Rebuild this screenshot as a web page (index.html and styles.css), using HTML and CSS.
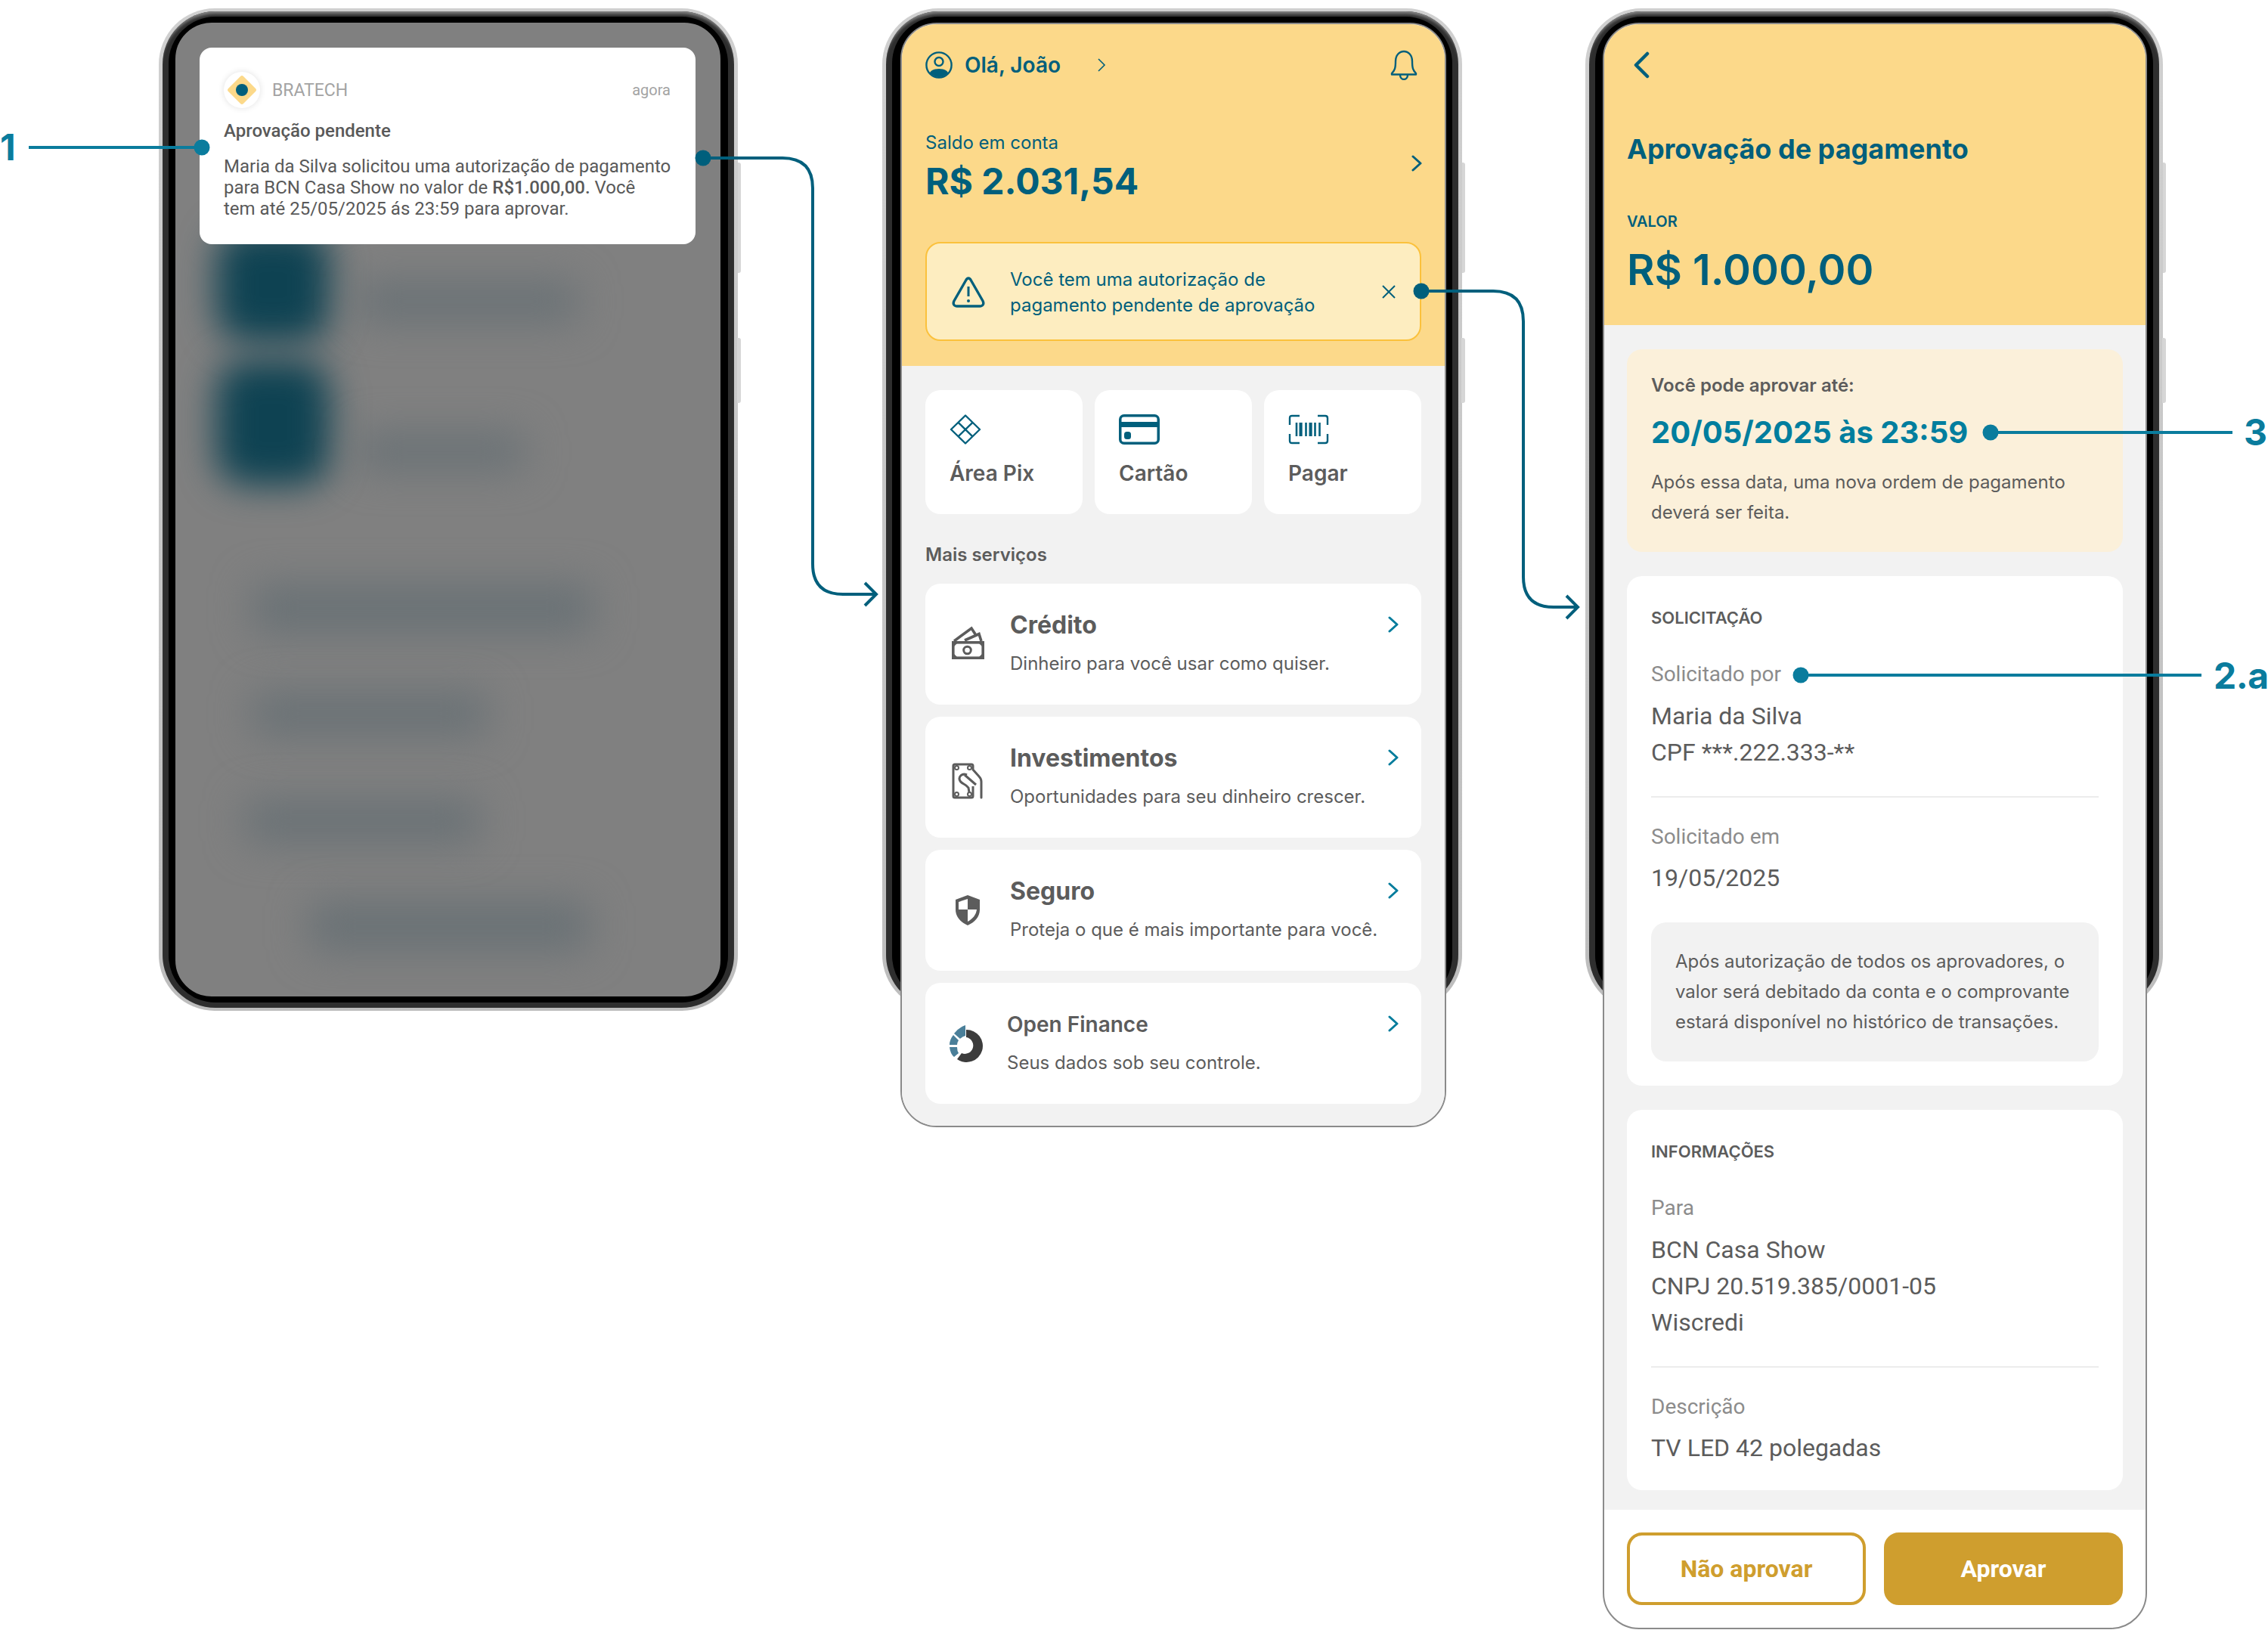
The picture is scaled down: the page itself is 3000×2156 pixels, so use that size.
FILE: index.html
```html
<!DOCTYPE html>
<html lang="pt-BR">

<head>
    <meta charset="UTF-8">
    <meta name="viewport" content="width=device-width, initial-scale=1.0">
    <title>Aprovação de pagamento</title>
    <link rel="stylesheet" href="styles.css">
</head>

<body>
    <div class="stage">

        <!-- Tela 1: notificação -->
        <section class="phone phone-one">
            <div class="phone-frame"></div>
            <div class="screen screen-locked">
                <div class="blur blur-a"></div>
                <div class="blur blur-b"></div>
                <div class="blur blur-c"></div>
                <div class="blur blur-d"></div>
                <div class="blur blur-e"></div>
                <div class="blur blur-f"></div>
                <div class="blur blur-g"></div>
                <div class="blur blur-h"></div>
                <div class="notification">
                    <div class="notification-head">
                        <span class="app-logo">
                            <svg width="40" height="40" viewBox="0 0 40 40">
                                <path d="M20 1 Q21 1 22 2 L38 18 Q40 20 38 22 L22 38 Q20 40 18 38 L2 22 Q0 20 2 18 L18 2 Q19 1 20 1 Z" fill="#fcd98a" />
                                <ellipse cx="20" cy="20" rx="8" ry="8" fill="#005f7c" />
                            </svg>
                        </span>
                        <span class="app-name">BRATECH</span>
                        <span class="app-time">agora</span>
                    </div>
                    <div class="notification-title">Aprovação pendente</div>
                    <p class="notification-text">Maria da Silva solicitou uma autorização de pagamento<br>para BCN Casa Show no valor de <b>R$1.000,00.</b> Você<br>tem até 25/05/2025 ás 23:59 para aprovar.</p>
                </div>
            </div>
        </section>

        <!-- Tela 2: home -->
        <section class="phone phone-two">
            <div class="phone-frame"></div>
            <div class="screen">
                <header class="home-head">
                    <div class="topbar">
                        <svg class="user-icon" width="36" height="36" viewBox="0 0 36 36">
                            <defs>
                                <clipPath id="userClip">
                                    <circle cx="18" cy="18" r="16" />
                                </clipPath>
                            </defs>
                            <path d="M4 36 C4 26 10 23 18 23 C26 23 32 26 32 36 Z" fill="#005f7c" clip-path="url(#userClip)" />
                            <circle cx="18" cy="13.5" r="5.5" fill="none" stroke="#005f7c" stroke-width="2.4" />
                            <circle cx="18" cy="18" r="16.6" fill="none" stroke="#005f7c" stroke-width="2.4" />
                        </svg>
                        <span class="greeting">Olá, João</span>
                        <svg class="greeting-arrow" width="12" height="20" viewBox="0 0 12 20">
                            <path d="M2 2 L10 10 L2 18" fill="none" stroke="#005f7c" stroke-width="1.6" />
                        </svg>
                        <svg class="bell" width="36" height="40" viewBox="0 0 36 40">
                            <path d="M2 31 C6 27 7 24 7 15 C7 7 12 2 18 2 C24 2 29 7 29 15 C29 24 30 27 34 31 L34 32.5 L2 32.5 Z" fill="none" stroke="#005f7c" stroke-width="2.4" stroke-linejoin="round" />
                            <path d="M13 33 C13 41 23 41 23 33" fill="none" stroke="#005f7c" stroke-width="2.4" />
                        </svg>
                    </div>
                    <div class="balance">
                        <div>
                            <div class="balance-label">Saldo em conta</div>
                            <div class="balance-value">R$ 2.031,54</div>
                        </div>
                        <svg class="balance-arrow" width="14" height="22" viewBox="0 0 14 22">
                            <path d="M2 2 L12 11 L2 20" fill="none" stroke="#005f7c" stroke-width="3" stroke-linecap="round" stroke-linejoin="round" />
                        </svg>
                    </div>
                    <div class="alert">
                        <svg width="46" height="42" viewBox="0 0 46 42">
                            <path d="M23 3 C24.5 3 25.5 4 26.5 6 L42 33 C44 37 42 40 38 40 L8 40 C4 40 2 37 4 33 L19.5 6 C20.5 4 21.5 3 23 3 Z" fill="none" stroke="#005f7c" stroke-width="3.4" stroke-linejoin="round" />
                            <path d="M23 14 V27" stroke="#005f7c" stroke-width="3" />
                            <circle cx="23" cy="33" r="2" fill="#005f7c" />
                        </svg>
                        <p class="alert-text">Você tem uma autorização de<br>pagamento pendente de aprovação</p>
                        <svg class="alert-close" width="20" height="20" viewBox="0 0 20 20">
                            <path d="M2 2 L18 18 M18 2 L2 18" stroke="#005f7c" stroke-width="2" />
                        </svg>
                    </div>
                </header>

                <div class="home-body">
                    <div class="shortcuts">
                        <div class="shortcut">
                            <svg width="44" height="40" viewBox="1 0 44 40">
                                <path d="M22 1.5 L41 20 L22 38.5 L3 20 Z M12.5 10.8 L31.5 29.3 M31.5 10.8 L12.5 29.3" fill="none" stroke="#005f7c" stroke-width="2.4" stroke-linejoin="round" />
                            </svg>
                            <span>Área Pix</span>
                        </div>
                        <div class="shortcut">
                            <svg width="54" height="40" viewBox="0 0 54 40">
                                <rect x="1.75" y="1.75" width="50.5" height="36.5" rx="5" fill="none" stroke="#005f7c" stroke-width="3.5" />
                                <rect x="2" y="10" width="50" height="7" fill="#005f7c" />
                                <rect x="7" y="23" width="9" height="10" rx="3.5" fill="#005f7c" />
                            </svg>
                            <span>Cartão</span>
                        </div>
                        <div class="shortcut">
                            <svg width="54" height="40" viewBox="0 0 54 40">
                                <path d="M15 2 H5 Q2 2 2 5 V14 M39 2 H49 Q52 2 52 5 V14 M15 38 H5 Q2 38 2 35 V26 M39 38 H49 Q52 38 52 35 V26" fill="none" stroke="#005f7c" stroke-width="2.4" />
                                <path d="M11 11 V29 M17 11 V29 M23.5 11 V29 M30 11 V29 M35.5 11 V29 M41.5 11 V29" stroke="#005f7c" stroke-width="2.6" />
                                <path d="M16.5 11 V29 M29.5 11 V29" stroke="#005f7c" stroke-width="4" />
                            </svg>
                            <span>Pagar</span>
                        </div>
                    </div>

                    <h2 class="section-title">Mais serviços</h2>

                    <div class="services">
                        <div class="service">
                            <svg class="service-icon" width="48" height="56" viewBox="6 6 48 56">
                                <path d="M12 28 L35 11 L41.5 21 M26 27 L45 18.5 L48 28" fill="none" stroke="#5c5c5c" stroke-width="3.6" />
                                <rect x="10.8" y="29.8" width="39.4" height="20.4" fill="none" stroke="#5c5c5c" stroke-width="3.6" />
                                <path d="M12 31 H16 L12 35 Z M49 31 H45 L49 35 Z M12 49 H16 L12 45 Z M49 49 H45 L49 45 Z" fill="#5c5c5c" />
                                <circle cx="29.5" cy="40" r="4.8" fill="none" stroke="#5c5c5c" stroke-width="3" />
                            </svg>
                            <div class="service-text">
                                <div class="service-title">Crédito</div>
                                <div class="service-desc">Dinheiro para você usar como quiser.</div>
                            </div>
                            <svg class="service-arrow" width="14" height="22" viewBox="0 0 14 22">
                                <path d="M2 2 L12 11 L2 20" fill="none" stroke="#007c9c" stroke-width="3" stroke-linecap="round" stroke-linejoin="round" />
                            </svg>
                        </div>
                        <div class="service">
                            <svg class="service-icon" width="48" height="56" viewBox="6 2 48 56">
                                <path d="M37 17 V13 Q37 11 35 11 H13 Q11 11 11 13 V53 Q11 55 13 55 H35 Q37 55 37 53 V40" fill="none" stroke="#5c5c5c" stroke-width="3" />
                                <circle cx="15.5" cy="15.5" r="2.5" fill="none" stroke="#5c5c5c" stroke-width="2" />
                                <circle cx="32.5" cy="15.5" r="2.5" fill="none" stroke="#5c5c5c" stroke-width="2" />
                                <circle cx="15.5" cy="50.5" r="2.5" fill="none" stroke="#5c5c5c" stroke-width="2" />
                                <circle cx="32.5" cy="50.5" r="2.5" fill="none" stroke="#5c5c5c" stroke-width="2" />
                                <path d="M37 18 L45 27 Q48 30 48 34 V55" fill="none" stroke="#5c5c5c" stroke-width="3" stroke-linecap="round" />
                                <path d="M29 25 C22 22 17 28 20 33 C22 37 28 37 31 42 L32 48 M26 25 L41 38" fill="none" stroke="#5c5c5c" stroke-width="3" />
                            </svg>
                            <div class="service-text">
                                <div class="service-title">Investimentos</div>
                                <div class="service-desc">Oportunidades para seu dinheiro crescer.</div>
                            </div>
                            <svg class="service-arrow" width="14" height="22" viewBox="0 0 14 22">
                                <path d="M2 2 L12 11 L2 20" fill="none" stroke="#007c9c" stroke-width="3" stroke-linecap="round" stroke-linejoin="round" />
                            </svg>
                        </div>
                        <div class="service">
                            <svg class="service-icon" width="48" height="56" viewBox="0 -5 48 56">
                                <path d="M24 1 L40 7 V20 C40 30 33 37 24 41 C15 37 8 30 8 20 V7 Z" fill="#5c5c5c" />
                                <path d="M24 6 V20 H12 V10 Z M24 20 H36 C35 27 31 32 24 36 Z" fill="#fff" />
                            </svg>
                            <div class="service-text">
                                <div class="service-title">Seguro</div>
                                <div class="service-desc">Proteja o que é mais importante para você.</div>
                            </div>
                            <svg class="service-arrow" width="14" height="22" viewBox="0 0 14 22">
                                <path d="M2 2 L12 11 L2 20" fill="none" stroke="#007c9c" stroke-width="3" stroke-linecap="round" stroke-linejoin="round" />
                            </svg>
                        </div>
                        <div class="service service-open">
                            <svg class="service-icon" width="48" height="56" viewBox="0 0 48 56">
                                <path d="M22 8 A21.5 21.5 0 1 1 10 47 L16 39 A11 11 0 1 0 22 18 Z" fill="#3c3c3c" />
                                <path d="M21 2 V16 Q17 17 14 20 L6 13 Q12 5 21 2 Z" fill="#4a7f99" />
                                <path d="M5 15 L12 22 Q10 25 10 28 H0 Q0 21 5 15 Z" fill="#4a7f99" />
                                <path d="M0 31 H10 Q10 36 12 39 L6 44 Q1 40 0 31 Z" fill="#4a7f99" />
                            </svg>
                            <div class="service-text">
                                <div class="service-title">Open Finance</div>
                                <div class="service-desc">Seus dados sob seu controle.</div>
                            </div>
                            <svg class="service-arrow" width="14" height="22" viewBox="0 0 14 22">
                                <path d="M2 2 L12 11 L2 20" fill="none" stroke="#007c9c" stroke-width="3" stroke-linecap="round" stroke-linejoin="round" />
                            </svg>
                        </div>
                    </div>
                </div>
            </div>
        </section>

        <!-- Tela 3: aprovação -->
        <section class="phone phone-three">
            <div class="phone-frame"></div>
            <div class="screen">
                <header class="detail-head">
                    <svg class="back" width="24" height="36" viewBox="0 0 24 36">
                        <path d="M21 3 L6 18 L21 33" fill="none" stroke="#005f7c" stroke-width="4.5" stroke-linecap="round" stroke-linejoin="round" />
                    </svg>
                    <h1 class="detail-title">Aprovação de pagamento</h1>
                    <div class="detail-label">VALOR</div>
                    <div class="detail-value">R$ 1.000,00</div>
                </header>

                <div class="detail-body">
                    <div class="deadline">
                        <div class="deadline-label">Você pode aprovar até:</div>
                        <div class="deadline-date">20/05/2025 às 23:59</div>
                        <p class="deadline-note">Após essa data, uma nova ordem de pagamento deverá ser feita.</p>
                    </div>

                    <div class="panel">
                        <h3 class="panel-title">SOLICITAÇÃO</h3>
                        <div class="field-label">Solicitado por</div>
                        <div class="field-value">Maria da Silva<br>CPF ***.222.333-**</div>
                        <hr class="divider">
                        <div class="field-label">Solicitado em</div>
                        <div class="field-value">19/05/2025</div>
                        <p class="panel-note">Após autorização de todos os aprovadores, o valor será debitado da conta e o comprovante estará disponível no histórico de transações.</p>
                    </div>

                    <div class="panel">
                        <h3 class="panel-title">INFORMAÇÕES</h3>
                        <div class="field-label">Para</div>
                        <div class="field-value">BCN Casa Show<br>CNPJ 20.519.385/0001-05<br>Wiscredi</div>
                        <hr class="divider">
                        <div class="field-label">Descrição</div>
                        <div class="field-value">TV LED 42 polegadas</div>
                    </div>
                </div>

                <footer class="detail-actions">
                    <button class="btn btn-outline">Não aprovar</button>
                    <button class="btn btn-solid">Aprovar</button>
                </footer>
            </div>
        </section>

        <!-- Conectores entre as telas -->
        <svg class="connectors" width="3000" height="2156" viewBox="0 0 3000 2156">
            <path d="M38 195 H267" class="line line-light" />
            <circle cx="267" cy="195" r="10.5" class="dot-light" />
            <path d="M930 209 H1035 Q1075 209 1075 249 V746 Q1075 786 1115 786 H1158 M1144 771 L1159 786 L1144 801" class="line" />
            <circle cx="930" cy="209" r="10.5" class="dot" />
            <path d="M1880 385 H1975 Q2015 385 2015 425 V763 Q2015 803 2055 803 H2086 M2072 788 L2087 803 L2072 818" class="line" />
            <circle cx="1880" cy="385" r="10.5" class="dot" />
            <path d="M2633 572 H2953" class="line line-light" />
            <circle cx="2633" cy="572" r="10.5" class="dot-light" />
            <path d="M2382 893 H2912" class="line line-light" />
            <circle cx="2382" cy="893" r="10.5" class="dot-light" />
        </svg>
        <span class="marker marker-one">1</span>
        <span class="marker marker-three">3</span>
        <span class="marker marker-two">2.a</span>
    </div>
</body>

</html>
```

FILE: styles.css
```css
/* Global */
* {
    box-sizing: border-box;
}

html,
body {
    margin: 0;
    padding: 0;
    background-color: #fff;
}

body {
    font-family: Inter, "Liberation Sans", sans-serif;
    color: #5c5c5c;
}

h1,
h2,
h3,
p {
    margin: 0;
    font-weight: inherit;
}

/* Canvas */
.stage {
    position: relative;
    width: 3000px;
    height: 2156px;
    overflow: hidden;
    display: flex;
    align-items: flex-start;
    padding: 11px 0 0 210px;
}

/* Phones */
.phone {
    position: relative;
    padding-top: 19px;
    flex: none;
}

.phone-one {
    width: 766px;
    padding-left: 22px;
}

.phone-two {
    width: 767px;
    margin-left: 191px;
    padding-left: 24px;
}

.phone-three {
    width: 764px;
    margin-left: 163px;
    padding-left: 23px;
}

.phone-frame {
    position: absolute;
    top: 0;
    left: 0;
    width: 100%;
    height: 1326px;
    border-radius: 74px;
    background: linear-gradient(#d0d0d0, #bdbdbd);
}

.phone-frame::before {
    content: "";
    position: absolute;
    inset: 4px 5px;
    border-radius: 70px;
    background: #2e2e2e;
    box-shadow: inset 0 6px 4px -3px #8a8a8a;
}

.phone-frame::after {
    content: "";
    position: absolute;
    top: 11px;
    right: 13px;
    bottom: 11px;
    left: 13px;
    border-radius: 62px;
    background: #000;
}

/* Side buttons */
.phone::before,
.phone::after {
    content: "";
    position: absolute;
    right: -4px;
    width: 5px;
    background: #d6d6d6;
    border-radius: 0 3px 3px 0;
}

.phone::before {
    top: 204px;
    height: 146px;
}

.phone::after {
    top: 436px;
    height: 86px;
}

.screen {
    position: relative;
    border: 2px solid #8a8a8a;
    border-radius: 48px;
    background-color: #fff;
    overflow: hidden;
}

.phone-one .screen {
    width: 721px;
    height: 1288px;
    padding: 31px 31px 0 30px;
    background-color: #808080;
    border-color: #808080;
}

.phone-two .screen {
    width: 722px;
    height: 1461px;
}

.phone-three .screen {
    width: 720px;
    height: 2125px;
}

/* Blurred background of the locked screen */
.blur {
    position: absolute;
    filter: blur(26px);
    background-color: #697175;
    border-radius: 10px;
}

.blur-a,
.blur-b {
    left: 52px;
    width: 150px;
    background-color: #0e4252;
    filter: blur(24px);
    border-radius: 40px;
}

.blur-a {
    top: 270px;
    height: 150px;
}

.blur-b {
    top: 445px;
    height: 165px;
}

.blur-c {
    left: 240px;
    top: 340px;
    width: 290px;
    height: 54px;
}

.blur-d {
    left: 240px;
    top: 540px;
    width: 220px;
    height: 50px;
}

.blur-e {
    left: 100px;
    top: 740px;
    width: 450px;
    height: 66px;
}

.blur-f {
    left: 100px;
    top: 883px;
    width: 310px;
    height: 58px;
}

.blur-g {
    left: 90px;
    top: 1025px;
    width: 310px;
    height: 58px;
}

.blur-h {
    left: 175px;
    top: 1160px;
    width: 370px;
    height: 66px;
}

/* Notification */
.notification {
    position: relative;
    height: 260px;
    padding: 32px 30px 0 32px;
    border-radius: 16px;
    background-color: #fff;
    font-family: Roboto, "Liberation Sans", sans-serif;
}

.notification-head {
    display: flex;
    align-items: center;
    height: 48px;
    padding-right: 3px;
}

.app-logo {
    display: flex;
    align-items: center;
    justify-content: center;
    width: 48px;
    height: 48px;
    border-radius: 50%;
    background-color: #fff;
    box-shadow: 0 0 8px rgba(0, 0, 0, 0.12);
}

.app-name {
    margin-left: 16px;
    font-size: 23px;
    color: #a3a3a3;
}

.app-time {
    margin-left: auto;
    font-size: 20px;
    color: #a3a3a3;
}

.notification-title {
    margin-top: 16px;
    font-size: 24px;
    line-height: 28px;
    font-weight: 500;
    color: #595959;
}

.notification-text {
    margin-top: 19px;
    font-size: 24px;
    line-height: 28px;
    white-space: nowrap;
    color: #595959;
}

.notification-text b {
    font-weight: 500;
}

/* Home header */
.home-head {
    height: 452px;
    padding: 34px 31px 0;
    background-color: #fcd98a;
    color: #005f7c;
}

.topbar {
    position: relative;
    display: flex;
    align-items: center;
    height: 40px;
}

.greeting {
    margin-left: 16px;
    font-size: 28px;
    font-weight: 600;
}

.greeting-arrow {
    margin-left: 48px;
}

.bell {
    margin-left: auto;
    margin-right: 5px;
}

.balance {
    position: relative;
    display: flex;
    align-items: center;
    justify-content: space-between;
    margin-top: 67px;
}

.balance-arrow {
    margin-right: -1px;
    margin-top: -10px;
}

.balance-label {
    font-size: 24px;
    line-height: 32px;
}

.balance-value {
    margin-top: 7px;
    font-size: 48px;
    line-height: 56px;
    font-weight: 700;
}

.alert {
    display: flex;
    align-items: center;
    height: 131px;
    margin-top: 52px;
    padding: 0 32px;
    border: 2px solid #fbc13c;
    border-radius: 20px;
    background-color: #fdedc0;
}

.alert-text {
    margin-left: 32px;
    margin-top: 2px;
    font-size: 24px;
    line-height: 34px;
}

.alert-close {
    margin-left: auto;
    margin-right: -1px;
}

/* Home body */
.home-body {
    height: 1007px;
    padding: 32px 31px 0;
    background-color: #f2f2f2;
}

.shortcuts {
    display: grid;
    grid-template-columns: repeat(3, 1fr);
    gap: 16px;
}

.shortcut {
    display: flex;
    flex-direction: column;
    align-items: flex-start;
    height: 164px;
    padding: 32px 32px 0;
    border-radius: 20px;
    background-color: #fff;
    font-size: 28px;
    font-weight: 600;
}

.shortcut span {
    margin-top: 20px;
    line-height: 36px;
}

.section-title {
    margin-top: 38px;
    font-size: 24px;
    line-height: 32px;
    font-weight: 600;
}

.services {
    display: flex;
    flex-direction: column;
    gap: 16px;
    margin-top: 22px;
}

.service {
    position: relative;
    display: flex;
    height: 160px;
    padding: 32px 32px 0;
    border-radius: 20px;
    background-color: #fff;
}

.service-icon {
    flex: none;
    margin-top: 22px;
}

.service-text {
    margin-left: 32px;
}

.service-title {
    font-size: 32px;
    line-height: 46px;
    font-weight: 700;
}

.service-desc {
    margin-top: 10px;
    font-size: 24px;
    line-height: 36px;
}

.service-arrow {
    position: absolute;
    top: 43px;
    right: 30px;
}

.service-open .service-text {
    margin-left: 28px;
}

.service-open .service-title {
    font-size: 28px;
    font-weight: 600;
}

/* Detail header */
.detail-head {
    height: 398px;
    padding: 36px 30px 0;
    background-color: #fcd98a;
    color: #005f7c;
}

.back {
    display: block;
    margin-left: 6px;
}

.detail-title {
    margin-top: 71px;
    font-size: 36px;
    line-height: 44px;
    font-weight: 700;
}

.detail-label {
    margin-top: 60px;
    font-size: 20px;
    line-height: 28px;
    font-weight: 600;
}

.detail-value {
    margin-top: 14px;
    font-size: 56px;
    line-height: 72px;
    font-weight: 600;
}

/* Detail body */
.detail-body {
    display: flex;
    flex-direction: column;
    gap: 32px;
    padding: 32px 30px 26px;
    background-color: #f2f2f2;
}

.deadline {
    height: 268px;
    padding: 32px 32px 0;
    border-radius: 20px;
    background-color: #fbf0da;
}

.deadline-label {
    font-size: 24px;
    line-height: 32px;
    font-weight: 600;
}

.deadline-date {
    margin-top: 20px;
    font-size: 40px;
    line-height: 52px;
    font-weight: 700;
    color: #007e9e;
}

.deadline-note {
    margin-top: 20px;
    font-size: 24px;
    line-height: 40px;
}

.panel {
    padding: 40px 32px 32px;
    border-radius: 20px;
    background-color: #fff;
}

.panel-title {
    font-size: 22px;
    line-height: 30px;
    font-weight: 600;
}

.field-label {
    margin-top: 42px;
    font-family: Roboto, "Liberation Sans", sans-serif;
    font-size: 28px;
    line-height: 36px;
    color: #8c8c8c;
}

.divider + .field-label {
    margin-top: 34px;
}

.field-value {
    margin-top: 12px;
    font-family: Roboto, "Liberation Sans", sans-serif;
    font-size: 32px;
    line-height: 48px;
}

.panel-title + .field-label + .field-value {
    margin-top: 13px;
}

.divider {
    height: 2px;
    margin: 34px 0 0;
    border: 0;
    background-color: #ececec;
}

.panel-note {
    margin-top: 35px;
    padding: 32px;
    border-radius: 20px;
    background-color: #f2f2f2;
    font-size: 24px;
    line-height: 40px;
}

/* Actions */
.detail-actions {
    display: grid;
    grid-template-columns: 1fr 1fr;
    gap: 24px;
    padding: 30px 30px 0;
}

.btn {
    height: 96px;
    padding: 0 0 1px;
    border-radius: 20px;
    font-family: Roboto, "Liberation Sans", sans-serif;
    font-size: 32px;
    font-weight: 700;
    border: 4px solid #cf9e2e;
}

.btn-outline {
    background-color: #fff;
    color: #cf9e2e;
}

.btn-solid {
    background-color: #cf9e2e;
    color: #fff;
}

/* Connectors */
.connectors {
    position: absolute;
    top: 0;
    left: 0;
    pointer-events: none;
}

.line {
    fill: none;
    stroke: #005f7c;
    stroke-width: 4;
}

.line-light {
    stroke: #0a7c9d;
}

.dot {
    fill: #005f7c;
}

.dot-light {
    fill: #0a7c9d;
}

.marker {
    position: absolute;
    font-size: 48px;
    line-height: 60px;
    font-weight: 700;
    color: #0a7c9d;
}

.marker-one {
    left: 0;
    top: 165px;
}

.marker-three {
    left: 2968px;
    top: 542px;
}

.marker-two {
    left: 2928px;
    top: 864px;
    letter-spacing: -0.5px;
}
```
